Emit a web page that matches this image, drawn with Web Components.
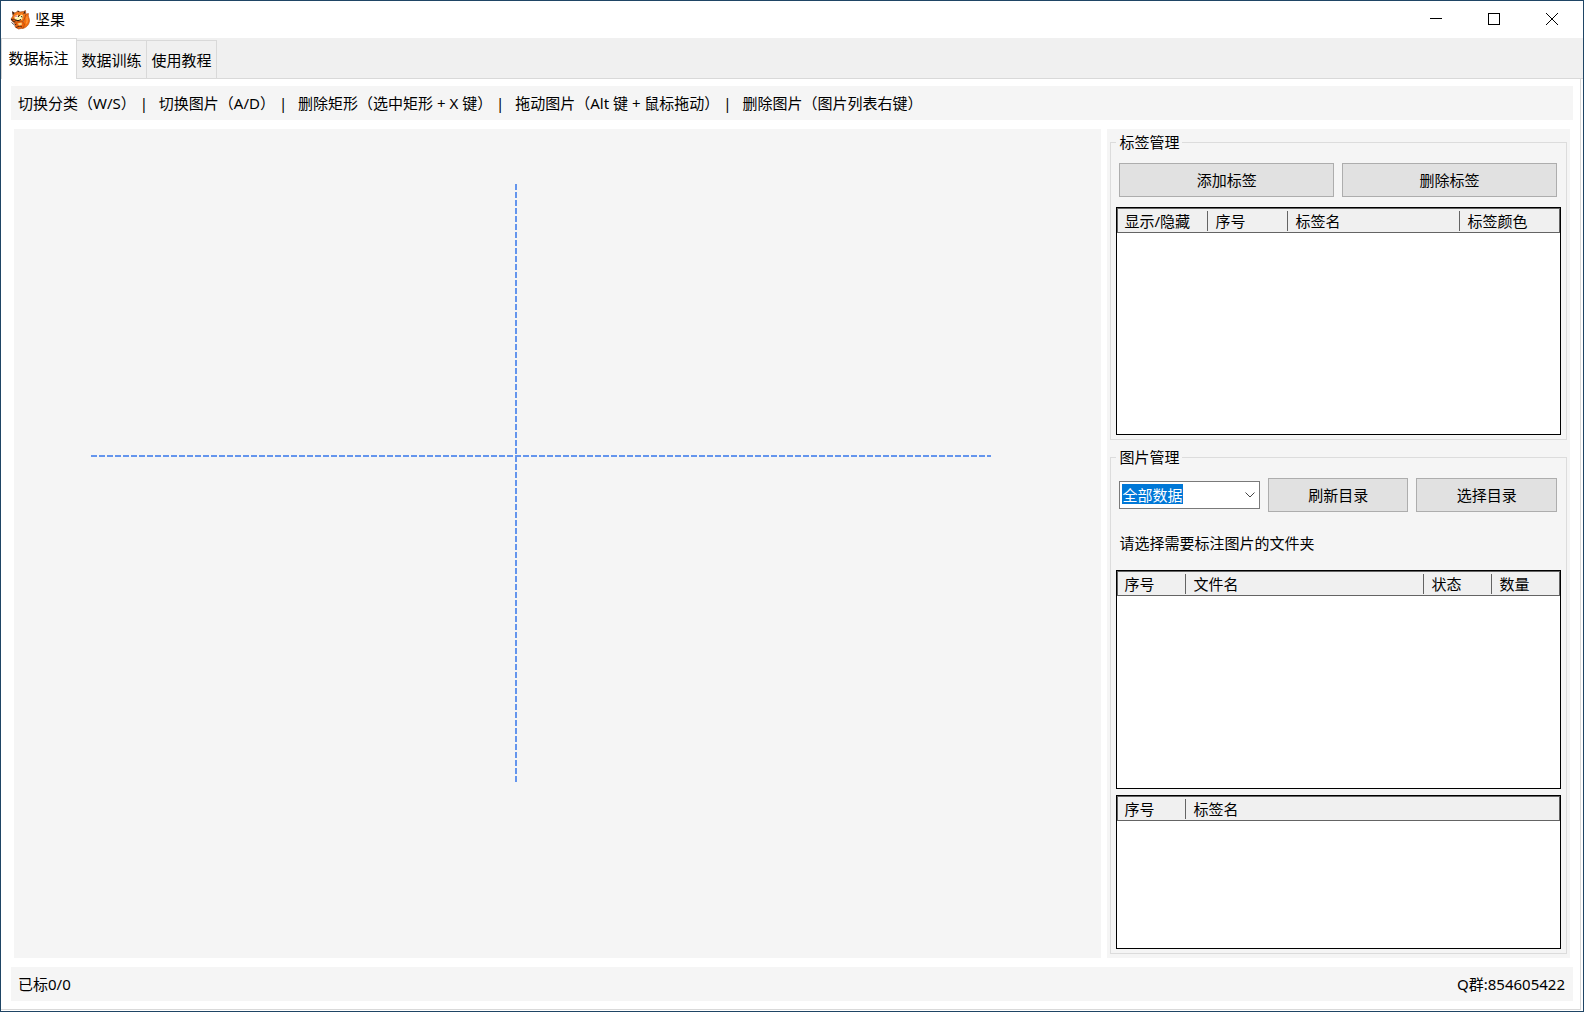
<!DOCTYPE html>
<html lang="zh-CN">
<head>
<meta charset="utf-8">
<title>坚果</title>
<style>
  html, body { height: 100%; margin: 0; }
  body { font: 15px/20px "Noto Sans", "Noto Sans CJK SC", sans-serif; color: #000; background: #fff; }
</style>
</head>
<body>
<app-window></app-window>
<script>
const define = (name, html, setup) => customElements.define(name, class extends HTMLElement {
  connectedCallback() {
    if (this.shadowRoot) return;
    const t = document.createElement('template');
    t.innerHTML = '<style>*{box-sizing:border-box}:host{box-sizing:border-box}button,select{font:inherit;color:inherit}</style>' + html;
    this.attachShadow({ mode: 'open' }).append(t.content.cloneNode(true));
    if (setup) setup(this, this.shadowRoot);
  }
});

define('app-logo', `
<style>:host{display:block;width:20px;height:20px}svg{display:block}</style>
<svg width="20" height="20" viewBox="0 0 20 20" aria-hidden="true">
  <path d="M12.500 18.500c3-.5 6.500-3 7-7.500.2-3-1.800-4-1-7.500-2.500 0-4.500 2-4.500 5 0 2.500-1 4-2 5z" fill="#f5700f" stroke="#b84a0a" stroke-width=".6"/>
  <path d="M2.500 2 5 3 8 1l2 1 3.500-.5 2-1 .3 4-1.300 4-2 3.500-5 1L3 12 1 9l2-3z" fill="#f5791a" stroke="#8c3608" stroke-width=".6"/>
  <path d="M2 1 4.500 3 3 5zM7.500.5l2 1-1.500.8zM14.500.8l.8 2.500-2 .7z" fill="#33221a"/>
  <path d="M4.500 6.500 7.500 4.500l1.200 2 3-2 1.500 1.500-1.200 3.500-3.500 1.500-4-1z" fill="#fff3a8"/>
  <path d="M5 7.500 7 6l.5 2zM8.500 8.500h2.500l-1 1.500z" fill="#fff"/>
  <path d="M5 5.500h2v1.500H5z" fill="#e889a0"/>
  <path d="M8 7l1.500-2M11 6.500l1.500.5M5.500 9.800l2.500 1 3-1.300" fill="none" stroke="#1c1210"/>
  <path d="M1 9.500 4.500 9l1.500 1.500-2 1.500z" fill="#e0570c" stroke="#23130c" stroke-width=".7"/>
  <path d="M4 12.500 11.500 11l3 3-1 4-5 1L5 17l.5-2z" fill="#ee6510" stroke="#a03f08" stroke-width=".6"/>
  <path d="M7.500 13.500l4-1 .5 2-2.500 1.500z" fill="#ffd98a"/>
  <path d="M1.500 12.500l3 2.500 2-1M6 17.500l4-1.500 2 1" fill="none" stroke="#33190c" stroke-width=".8"/>
  <path d="M17 6.500c-.5 3 1.200 4-.7 7" fill="none" stroke="#ff9b3d" stroke-width="1.200"/>
</svg>`);

define('title-bar', `
<style>
  :host{display:flex;align-items:center;height:37px;padding:0 2px 0 9px;background:#fff}
  h1{flex:1;margin:0 0 2px 5px;font:inherit}
  button{width:58px;height:37px;padding:0 0 1px;border:0;background:none;display:grid;place-items:center}
  svg{display:block;fill:none;stroke:#000;shape-rendering:crispEdges}
</style>
<app-logo></app-logo><h1>坚果</h1>
<button aria-label="最小化"><svg width="12" height="12"><path d="M0 5.500h12"/></svg></button>
<button aria-label="最大化"><svg width="12" height="12"><path d="M.5.5h11v11H.5z"/></svg></button>
<button aria-label="关闭"><svg width="12" height="12" style="shape-rendering:auto"><path d="M0 0l12 12M12 0L0 12"/></svg></button>`);

define('tab-strip', `
<style>
  :host{display:flex;align-items:flex-end;height:41px;background:#f0f0f0;box-shadow:inset 0 -1px #d9d9d9}
  button{width:70px;height:39px;padding:0;border:1px solid #d9d9d9;border-left:0;background:#f0f0f0;white-space:nowrap}
  button[aria-selected=true]{width:76px;height:41px;padding:0 1px 3px 0;border-left:1px solid #d9d9d9;border-bottom:0;background:#fff}
</style>
<button role="tab" aria-selected="true">数据标注</button>
<button role="tab" aria-selected="false">数据训练</button>
<button role="tab" aria-selected="false">使用教程</button>`);

define('info-bar', `
<style>:host{display:flex;align-items:center;justify-content:space-between;height:34px;padding:0 8px 0 7px;background:#f5f5f5;white-space:pre}</style>
<slot></slot>`);

define('image-canvas', `
<style>
  :host{display:block;background:#f5f5f5;overflow:hidden}
  svg{display:block;width:100%;height:100%}
  path{stroke:#6495ed;stroke-width:2;stroke-dasharray:6 2}
</style>
<svg aria-hidden="true"><path d="M77 327H977"/><path d="M502 55V653"/></svg>`);

define('group-box', `
<style>
  :host{display:block;min-height:0}
  fieldset{display:flex;flex-direction:column;height:100%;min-width:0;margin:0;padding:11px 5px 4px;border:1px solid #dcdcdc}
  legend{padding:0 3px}
</style>
<fieldset><legend></legend><slot></slot></fieldset>`,
(host, root) => { root.querySelector('legend').textContent = host.getAttribute('label'); });

define('button-row', `
<style>:host{display:grid;grid-auto-flow:column;grid-auto-columns:minmax(0,1fr);gap:8px;align-items:center;flex:none;padding:0 4px 0 3px;height:34px}</style>
<slot></slot>`);

define('push-button', `
<style>:host{display:block}button{display:block;width:100%;height:34px;padding:0;border:1px solid #adadad;background:#e1e1e1}</style>
<button><slot></slot></button>`);

define('combo-box', `
<style>
  :host{display:grid;align-items:center}
  select,svg{grid-area:1/1}
  select{appearance:none;width:100%;height:28px;padding:0 20px 0 2px;border:1px solid #7a7a7a;border-radius:0;color:#fff;
    background:linear-gradient(#0078d7,#0078d7) 2px 2px/61px 20px no-repeat #fff}
  option{color:#000}
  svg{justify-self:end;margin-right:5px;pointer-events:none;fill:none;stroke:#444}
</style>
<select aria-label="数据筛选"><option>全部数据</option></select>
<svg width="10" height="6"><path d="M.5.5 5 5 9.500.5"/></svg>`);

define('data-list', `
<style>
  :host{display:block;min-height:0;border:1px solid #000;background:#fff;overflow:hidden}
  table{width:100%;table-layout:fixed;border-collapse:separate;border-spacing:0}
  thead{background:#f0f0f0}
  tr{outline:1px solid #646464;outline-offset:-1px}
  th{height:25px;padding:1px 0 0 7px;text-align:left;font-weight:400;line-height:20px;
    background:linear-gradient(#646464,#646464) right 3px/1px 20px no-repeat}
  th:last-child{background:none}
</style>
<table><thead><tr></tr></thead><tbody></tbody></table>`,
(host, root) => {
  const tr = root.querySelector('tr');
  for (const col of host.getAttribute('columns').split(',')) {
    const [name, width] = col.split(':');
    const th = document.createElement('th');
    th.scope = 'col';
    th.textContent = name;
    if (width) th.style.width = width + 'px';
    tr.append(th);
  }
});

define('app-window', `
<style>
  :host{display:flex;flex-direction:column;min-height:100vh;border:1px solid #1f4565}
  .page{flex:1;display:flex;flex-direction:column;gap:9px;margin:0 2px 1px 0;padding:7px 7px 8px 10px;border:solid #d9d9d9;border-width:0 1px 1px 0}
  main{flex:1;display:grid;grid-template-columns:minmax(0,7fr) minmax(0,3fr);min-height:0}
  image-canvas{margin:0 3px}
  aside{display:grid;grid-template-rows:minmax(0,38fr) minmax(0,62fr);margin:0 3px;background:#f5f5f5}
  group-box{margin:3px 3px 4px}
  i{font-style:normal;margin-right:7px}
  .tags{flex:1;margin-top:10px}
  p{flex:none;margin:0;padding:21px 3px 17px}
  .files{flex:10 1 0}
  .marks{flex:7 1 0;margin-top:6px}
</style>
<title-bar></title-bar>
<tab-strip role="tablist"></tab-strip>
<div class="page">
  <info-bar><span>切换分类（W/S）<i> | </i>切换图片（A/D）<i> | </i>删除矩形（选中矩形 + X 键）<i> | </i>拖动图片（Alt 键 + 鼠标拖动）<i> | </i>删除图片（图片列表右键）</span></info-bar>
  <main>
    <image-canvas></image-canvas>
    <aside>
      <group-box label="标签管理">
        <button-row><push-button>添加标签</push-button><push-button>删除标签</push-button></button-row>
        <data-list class="tags" columns="显示/隐藏:91,序号:80,标签名:172,标签颜色"></data-list>
      </group-box>
      <group-box label="图片管理">
        <button-row><combo-box></combo-box><push-button>刷新目录</push-button><push-button>选择目录</push-button></button-row>
        <p>请选择需要标注图片的文件夹</p>
        <data-list class="files" columns="序号:69,文件名:238,状态:68,数量"></data-list>
        <data-list class="marks" columns="序号:69,标签名"></data-list>
      </group-box>
    </aside>
  </main>
  <info-bar><span>已标0/0</span><span>Q群:854605422</span></info-bar>
</div>`);
</script>
</body>
</html>
